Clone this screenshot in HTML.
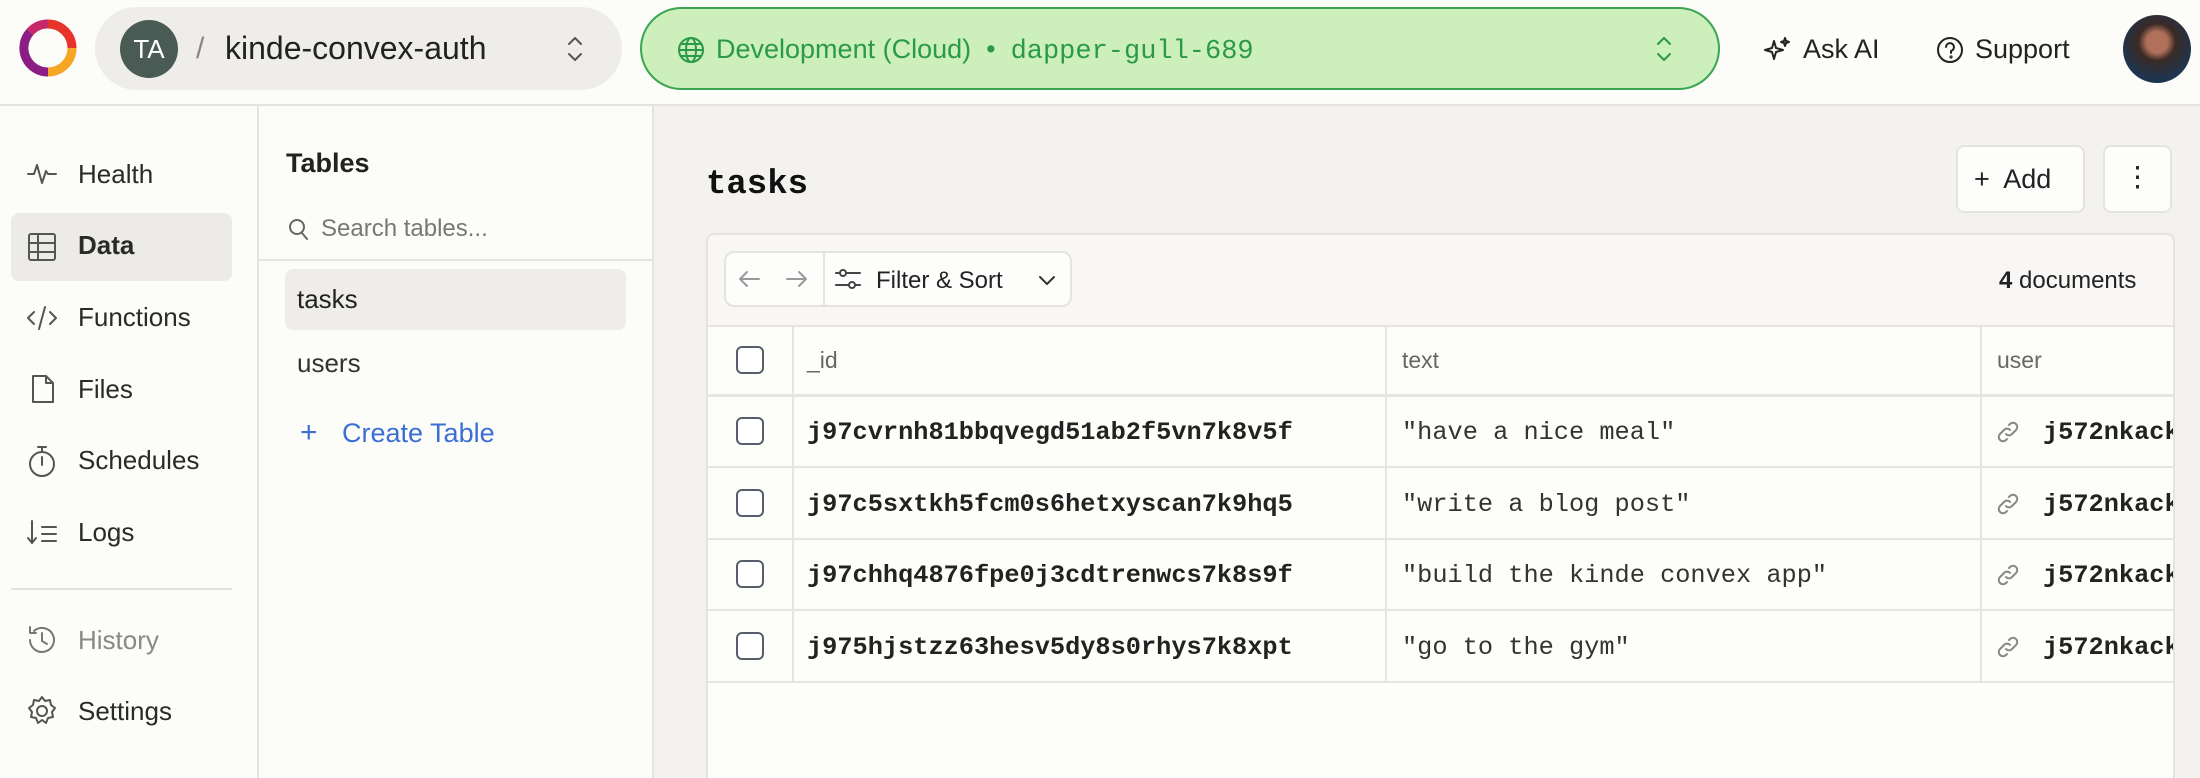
<!DOCTYPE html>
<html><head><meta charset="utf-8"><style>
*{box-sizing:border-box;margin:0;padding:0}
html{overflow:hidden;width:2200px;height:778px}
body{width:2200px;height:778px;overflow:hidden;background:#fcfcf9;font-family:"Liberation Sans",sans-serif;color:#222;position:relative}
.abs{position:absolute}
.mono{font-family:"Liberation Mono","DejaVu Sans Mono",monospace}
.nav{position:absolute;left:78px;font-size:26px;color:#2a2a2a}
.ic{position:absolute;fill:none;stroke:#555;stroke-width:2;stroke-linecap:round;stroke-linejoin:round}
.row{position:absolute;left:707px;width:1466px;border-top:2px solid #e6e5e1}
.cb{position:absolute;left:736px;width:28px;height:28px;border:2px solid #555e6a;border-radius:6px;background:#fff}
.id{position:absolute;left:807px;font-size:25.3px;font-weight:bold;color:#222}
.tx{position:absolute;left:1402px;font-size:25.3px;color:#333}
.us{position:absolute;left:2043px;font-size:25.3px;font-weight:bold;color:#222}
</style></head><body>
<div class="abs" style="left:0;top:0;width:2200px;height:106px;background:#fcfcf9;border-bottom:2px solid #e4e3df"></div>
<svg class="abs" style="left:18px;top:18px" width="60" height="60" viewBox="0 0 60 60">
<path d="M30 6 A24 24 0 0 1 54 30" stroke="#e8332a" stroke-width="9" fill="none"/>
<path d="M54 30 A24 24 0 0 1 30 54" stroke="#f5a623" stroke-width="9" fill="none"/>
<path d="M30 54 A24 24 0 0 1 12 14" stroke="#8c1d85" stroke-width="9" fill="none"/>
<path d="M12 14 A24 24 0 0 1 30 6" stroke="#c6286a" stroke-width="9" fill="none"/>
</svg>
<div class="abs" style="left:95px;top:7px;width:527px;height:83px;background:#efedea;border-radius:42px"></div>
<div class="abs" style="left:120px;top:20px;width:58px;height:58px;border-radius:50%;background:#4a5a55;color:#fff;font-size:26px;line-height:58px;text-align:center">TA</div>
<div class="abs" style="left:196px;top:32px;font-size:30px;color:#888">/</div>
<div class="abs" style="left:225px;top:30px;font-size:32px;color:#222">kinde-convex-auth</div>
<svg class="ic" style="left:564px;top:33px" width="22" height="32" viewBox="0 0 22 32"><path d="M5 11l6-6 6 6M5 21l6 6 6-6"/></svg>
<div class="abs" style="left:640px;top:7px;width:1080px;height:83px;background:#ccefbb;border:2px solid #3aa652;border-radius:42px"></div>
<svg class="ic" style="left:676px;top:35px;stroke:#2a9a48" width="30" height="30" viewBox="0 0 30 30"><circle cx="15" cy="15" r="12"/><ellipse cx="15" cy="15" rx="5" ry="12"/><path d="M3 15h24M5 9h20M5 21h20"/></svg>
<div class="abs" style="left:716px;top:34px;font-size:27px;color:#2a9a48">Development (Cloud)&nbsp; •&nbsp; <span class="mono">dapper-gull-689</span></div>
<svg class="ic" style="left:1653px;top:33px;stroke:#2a9a48" width="22" height="32" viewBox="0 0 22 32"><path d="M5 11l6-6 6 6M5 21l6 6 6-6"/></svg>
<svg class="ic" style="left:1762px;top:35px;stroke:#222" width="30" height="30" viewBox="0 0 30 30"><path d="M12 6l2 7 7 2-7 2-2 7-2-7-7-2 7-2z"/><path d="M23 3l1 3 3 1-3 1-1 3-1-3-3-1 3-1z"/></svg>
<div class="abs" style="left:1803px;top:34px;font-size:27px;color:#222">Ask AI</div>
<svg class="ic" style="left:1935px;top:35px;stroke:#222" width="30" height="30" viewBox="0 0 30 30"><circle cx="15" cy="15" r="12"/><path d="M11 12a4 4 0 1 1 5 4v2"/><circle cx="16" cy="22" r=".6"/></svg>
<div class="abs" style="left:1975px;top:34px;font-size:27px;color:#222">Support</div>
<div class="abs" style="left:2123px;top:15px;width:68px;height:68px;border-radius:50%;background:radial-gradient(circle at 50% 40%,#b0705a 0 20%,#3a2a25 35%,#1e3550 70%)"></div>
<div class="abs" style="left:257px;top:106px;width:2px;height:672px;background:#e4e3df"></div>
<div class="abs" style="left:11px;top:213px;width:221px;height:68px;background:#ecebe8;border-radius:8px"></div>
<svg class="ic" style="left:26px;top:160px" width="32" height="28" viewBox="0 0 32 28"><path d="M2 14h6l3-9 5 18 4-12 2 3h8"/></svg>
<div class="nav" style="top:159px">Health</div>
<svg class="ic" style="left:27px;top:232px" width="30" height="30" viewBox="0 0 30 30"><rect x="2" y="2" width="26" height="26" rx="2"/><path d="M2 11h26M2 20h26M11 2v26"/></svg>
<div class="nav" style="top:230px;font-weight:bold">Data</div>
<svg class="ic" style="left:26px;top:304px" width="32" height="28" viewBox="0 0 32 28"><path d="M8 8l-6 6 6 6M24 8l6 6-6 6M19 3l-6 22"/></svg>
<div class="nav" style="top:302px">Functions</div>
<svg class="ic" style="left:30px;top:373px" width="26" height="32" viewBox="0 0 26 32"><path d="M3 3h13l7 7v19H3z M16 3v7h7"/></svg>
<div class="nav" style="top:374px">Files</div>
<svg class="ic" style="left:26px;top:443px" width="32" height="36" viewBox="0 0 32 36"><circle cx="16" cy="21" r="12"/><path d="M16 14v8M12 4h8M16 4v5"/></svg>
<div class="nav" style="top:445px">Schedules</div>
<svg class="ic" style="left:26px;top:518px" width="34" height="30" viewBox="0 0 34 30"><path d="M6 3v22M2 20l4 5 4-5M16 9h14M16 16h14M16 23h14"/></svg>
<div class="nav" style="top:517px">Logs</div>
<div class="abs" style="left:11px;top:588px;width:221px;height:2px;background:#e4e3df"></div>
<svg class="ic" style="left:26px;top:624px;stroke:#777" width="32" height="32" viewBox="0 0 32 32"><path d="M4 16a12 12 0 1 0 4-9M4 3v6h6M16 9v8l5 3"/></svg>
<div class="nav" style="top:625px;color:#888">History</div>
<svg class="ic" style="left:26px;top:695px" width="32" height="32" viewBox="0 0 32 32"><circle cx="16" cy="16" r="5"/><path d="M16 2l3 4 5-1 1 5 4 3-3 4 1 5-5 1-2 5-4-3-4 3-2-5-5-1 1-5-3-4 4-3 1-5 5 1z"/></svg>
<div class="nav" style="top:696px">Settings</div>
<div class="abs" style="left:652px;top:106px;width:2px;height:672px;background:#e4e3df"></div>
<div class="abs" style="left:286px;top:148px;font-size:27px;font-weight:bold">Tables</div>
<svg class="ic" style="left:288px;top:218px;stroke:#666" width="22" height="24" viewBox="0 0 22 24"><circle cx="9" cy="9" r="7"/><path d="M14 15l5 6"/></svg>
<div class="abs" style="left:321px;top:215px;font-size:24px;color:#777">Search tables...</div>
<div class="abs" style="left:259px;top:259px;width:393px;height:2px;background:#e4e3df"></div>
<div class="abs" style="left:285px;top:269px;width:341px;height:61px;background:#efedea;border-radius:8px"></div>
<div class="abs" style="left:297px;top:284px;font-size:26px">tasks</div>
<div class="abs" style="left:297px;top:348px;font-size:26px;color:#333">users</div>
<div class="abs" style="left:300px;top:416px;font-size:30px;color:#3b6fd4">+</div>
<div class="abs" style="left:342px;top:418px;font-size:27px;color:#3b6fd4">Create Table</div>
<div class="abs" style="left:654px;top:106px;width:1546px;height:672px;background:#f3f2ef"></div>
<div class="abs mono" style="left:706px;top:166px;font-size:34px;font-weight:bold;color:#111">tasks</div>
<div class="abs" style="left:1956px;top:145px;width:129px;height:68px;background:#fdfdfb;border:2px solid #e4e3df;border-radius:8px;font-size:27px;line-height:64px;padding-left:16px">+&nbsp; Add</div>
<div class="abs" style="left:2103px;top:145px;width:69px;height:68px;background:#fdfdfb;border:2px solid #e4e3df;border-radius:8px;text-align:center;font-size:28px;line-height:60px">⋮</div>
<div class="abs" style="left:706px;top:233px;width:1469px;height:545px;background:#f8f7f5;border:2px solid #e4e3df;border-bottom:none;border-radius:8px 8px 0 0"></div>
<div class="abs" style="left:708px;top:326px;width:1465px;height:452px;background:#fdfdfa"></div>
<div class="abs" style="left:724px;top:251px;width:348px;height:56px;background:#fdfdfb;border:2px solid #e4e3df;border-radius:10px"></div>
<div class="abs" style="left:823px;top:253px;width:2px;height:52px;background:#e4e3df"></div>
<svg class="ic" style="left:737px;top:268px;stroke:#999" width="24" height="22" viewBox="0 0 24 22"><path d="M22 11H3M10 4l-7 7 7 7"/></svg>
<svg class="ic" style="left:785px;top:268px;stroke:#999" width="24" height="22" viewBox="0 0 24 22"><path d="M2 11h19M14 4l7 7-7 7"/></svg>
<svg class="ic" style="left:834px;top:266px;stroke:#444" width="28" height="26" viewBox="0 0 28 26"><path d="M2 7h24M2 19h24"/><circle cx="9" cy="7" r="3" fill="#fff"/><circle cx="18" cy="19" r="3" fill="#fff"/></svg>
<div class="abs" style="left:876px;top:267px;font-size:24px;color:#222">Filter &amp; Sort</div>
<svg class="ic" style="left:1037px;top:274px;stroke:#333" width="20" height="14" viewBox="0 0 20 14"><path d="M3 3l7 7 7-7"/></svg>
<div class="abs" style="left:1999px;top:267px;font-size:24px;color:#222"><b>4</b> documents</div>
<div class="row" style="top:325px"></div>
<div class="row" style="top:394px;border-top-width:3px"></div>
<div class="row" style="top:466px"></div>
<div class="row" style="top:538px"></div>
<div class="row" style="top:609px"></div>
<div class="row" style="top:681px"></div>
<div class="abs" style="left:792px;top:326px;width:2px;height:357px;background:#e6e5e1"></div>
<div class="abs" style="left:1385px;top:326px;width:2px;height:357px;background:#e6e5e1"></div>
<div class="abs" style="left:1980px;top:326px;width:2px;height:357px;background:#e6e5e1"></div>
<div class="cb" style="top:346px"></div>
<div class="abs" style="left:807px;top:347px;font-size:23px;color:#666">_id</div>
<div class="abs" style="left:1402px;top:347px;font-size:23px;color:#666">text</div>
<div class="abs" style="left:1997px;top:347px;font-size:23px;color:#666">user</div>
<div class="cb" style="top:417px"></div>
<div class="id mono" style="top:418px">j97cvrnh81bbqvegd51ab2f5vn7k8v5f</div>
<div class="tx mono" style="top:418px">"have a nice meal"</div>
<div class="cb" style="top:489px"></div>
<div class="id mono" style="top:490px">j97c5sxtkh5fcm0s6hetxyscan7k9hq5</div>
<div class="tx mono" style="top:490px">"write a blog post"</div>
<div class="cb" style="top:560px"></div>
<div class="id mono" style="top:561px">j97chhq4876fpe0j3cdtrenwcs7k8s9f</div>
<div class="tx mono" style="top:561px">"build the kinde convex app"</div>
<div class="cb" style="top:632px"></div>
<div class="id mono" style="top:633px">j975hjstzz63hesv5dy8s0rhys7k8xpt</div>
<div class="tx mono" style="top:633px">"go to the gym"</div>
<div class="abs" style="left:1996px;top:400px;width:177px;height:280px;overflow:hidden">
<svg class="ic" style="left:0;top:20px;stroke:#888" width="24" height="24" viewBox="0 0 24 24"><path d="M10 14a4 4 0 0 0 6 0l4-4a4 4 0 0 0-6-6l-1 1M14 10a4 4 0 0 0-6 0l-4 4a4 4 0 0 0 6 6l1-1"/></svg>
<div class="us mono" style="left:47px;top:18px">j572nkackx</div>
<svg class="ic" style="left:0;top:92px;stroke:#888" width="24" height="24" viewBox="0 0 24 24"><path d="M10 14a4 4 0 0 0 6 0l4-4a4 4 0 0 0-6-6l-1 1M14 10a4 4 0 0 0-6 0l-4 4a4 4 0 0 0 6 6l1-1"/></svg>
<div class="us mono" style="left:47px;top:90px">j572nkackx</div>
<svg class="ic" style="left:0;top:163px;stroke:#888" width="24" height="24" viewBox="0 0 24 24"><path d="M10 14a4 4 0 0 0 6 0l4-4a4 4 0 0 0-6-6l-1 1M14 10a4 4 0 0 0-6 0l-4 4a4 4 0 0 0 6 6l1-1"/></svg>
<div class="us mono" style="left:47px;top:161px">j572nkackx</div>
<svg class="ic" style="left:0;top:235px;stroke:#888" width="24" height="24" viewBox="0 0 24 24"><path d="M10 14a4 4 0 0 0 6 0l4-4a4 4 0 0 0-6-6l-1 1M14 10a4 4 0 0 0-6 0l-4 4a4 4 0 0 0 6 6l1-1"/></svg>
<div class="us mono" style="left:47px;top:233px">j572nkackx</div>
</div>
</body></html>
